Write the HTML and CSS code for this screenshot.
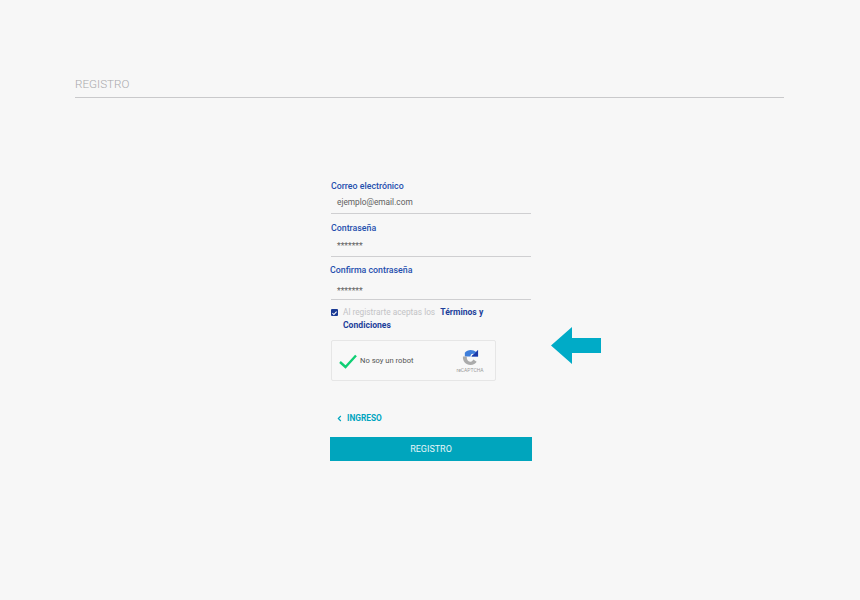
FILE: index.html
```html
<!DOCTYPE html>
<html lang="es">
<head>
<meta charset="utf-8">
<title>Registro</title>
<link rel="stylesheet" href="styles.css">
</head>
<body>
<header class="page-head"><h1 class="page-title">REGISTRO</h1></header>
<main class="form-wrap">
  <form class="form">
    <div class="field field-first">
      <label class="label">Correo electrónico</label>
      <div class="value">ejemplo@email.com</div>
    </div>
    <div class="field field-second">
      <label class="label">Contraseña</label>
      <div class="value stars">*******</div>
    </div>
    <div class="field field-third">
      <label class="label label-shift">Confirma contraseña</label>
      <div class="value stars">*******</div>
    </div>
    <div class="terms">
      <span class="check"><svg viewBox="0 0 8 8" width="8" height="8"><path d="M1.6 4.2 3.3 5.8 6.4 2.4" fill="none" stroke="#fff" stroke-width="1.2"/></svg></span>
      <p class="terms-text"><span class="muted">Al registrarte aceptas los</span> <a class="terms-link terms-link-first">Términos y</a><br><a class="terms-link">Condiciones</a></p>
    </div>
    <div class="captcha-row">
      <div class="captcha">
        <svg class="tick" viewBox="0 0 18 15" width="18" height="15"><path d="M1 8 6.5 13 17 1.5" fill="none" stroke="#0fcf74" stroke-width="2.4"/></svg>
        <span class="captcha-text">No soy un robot</span>
        <div class="recaptcha">
          <svg viewBox="0 0 18 18" width="17" height="17">
            <path d="M3 1 3 8 9 8 C9 5 11 4.5 13 5.5 L10 8 17 8 17 1 15 3.2 C12 .5 6 0 3 4Z" fill="#3f7fdb"/>
            <path d="M10 8 17 8 17 1 14 4 C15 5 12 5 10 8Z" fill="#1c3aa9"/>
            <path d="M1 8 C.5 13 4 17 9 17 12 17 14.5 15.5 15.5 13.5 L12 11 C11.2 12.8 10 13.5 8.5 13.5 6.3 13.5 5 11.5 5 8Z" fill="#ababab"/>
          </svg>
          <span class="recaptcha-text">reCAPTCHA</span>
        </div>
      </div>
      <svg class="arrow" viewBox="0 0 50 37" width="50" height="37"><path d="M0 18.5 21 0V11H50V26H21V37Z" fill="#00abc7"/></svg>
    </div>
    <a class="back"><svg viewBox="0 0 6 8" width="5" height="7"><path d="M4.6 1 1.6 4 4.6 7" fill="none" stroke="#00a5bf" stroke-width="1.4"/></svg><span>INGRESO</span></a>
    <button class="submit" type="button">REGISTRO</button>
  </form>
</main>
</body>
</html>
```
FILE: styles.css
```css
* { box-sizing: border-box; }
html, body { margin: 0; height: 100%; }
body { background: #f7f7f7; font-family: Roboto, "Liberation Sans", sans-serif; width: 860px; height: 600px; overflow: hidden; }
.page-head { margin: 0 76px 0 75px; padding-top: 76px; border-bottom: 1px solid #c9c9cb; height: 98px; }
.page-title { margin: 0; font-size: 11.7px; line-height: 16px; font-weight: 300; color: #a9a9ac; }
.form-wrap { padding: 81px 0 0 330px; }
.form { width: 202px; display: flex; flex-direction: column; }
.field { margin-left: 1px; width: 200px; border-bottom: 1px solid #cfcfd1; }
.field-first { height: 35px; }
.field-second { height: 43px; }
.field-third { height: 43px; }
.label { display: block; font-size: 8.8px; line-height: 14px; font-weight: 500; color: #1f4fae; height: 15px; }
.field-second .label { margin-top: 7px; }
.field-third .label { margin-top: 6px; }
.label-shift { margin-left: -1px; }
.value { font-size: 8.3px; line-height: 12px; color: #606060; padding: 2px 0 0 6px; }
.stars { padding-top: 4px; font-size: 8.5px; }
.field-third .stars { padding-top: 7px; }
.terms { display: flex; margin: 6px 0 0 1px; gap: 5px; }
.check { width: 7px; height: 7px; margin-top: 3px; background: #1a3a94; border-radius: 1px; display: flex; align-items: center; justify-content: center; flex: none; }
.terms-text { margin: 0; width: 150px; font-size: 8.3px; line-height: 13px; }
.muted { color: #c3c3c6; }
.terms-link { color: #1d3f9b; font-weight: 700; font-size: 8.6px; }
.terms-link-first { margin-left: 3px; }
.captcha-row { display: flex; align-items: flex-start; margin: 8px 0 0 1px; height: 60px; }
.captcha { flex: none; width: 165px; height: 41px; background: #f8f8f8; border: 1px solid #e6e6e6; border-radius: 2px; display: flex; align-items: center; padding-left: 7px; }
.tick { flex: none; margin-top: 1px; }
.captcha-text { margin-left: 3px; font-size: 7.6px; color: #555; white-space: nowrap; }
.recaptcha { margin-left: auto; margin-right: 12px; width: 26px; display: flex; flex-direction: column; align-items: center; margin-top: 1px; }
.recaptcha-text { font-size: 5px; line-height: 8px; color: #9a9a9a; }
.arrow { margin: -13px 0 0 55px; flex: none; }
.back { display: flex; align-items: center; gap: 5px; margin: 12px 0 0 7px; height: 12px; font-size: 8.3px; font-weight: 700; color: #00a5bf; }
.submit { margin-top: 13px; width: 202px; height: 24px; background: #00a5bd; border: 0; color: #e6f6f9; font-family: inherit; font-size: 9px; padding: 0; }
```
